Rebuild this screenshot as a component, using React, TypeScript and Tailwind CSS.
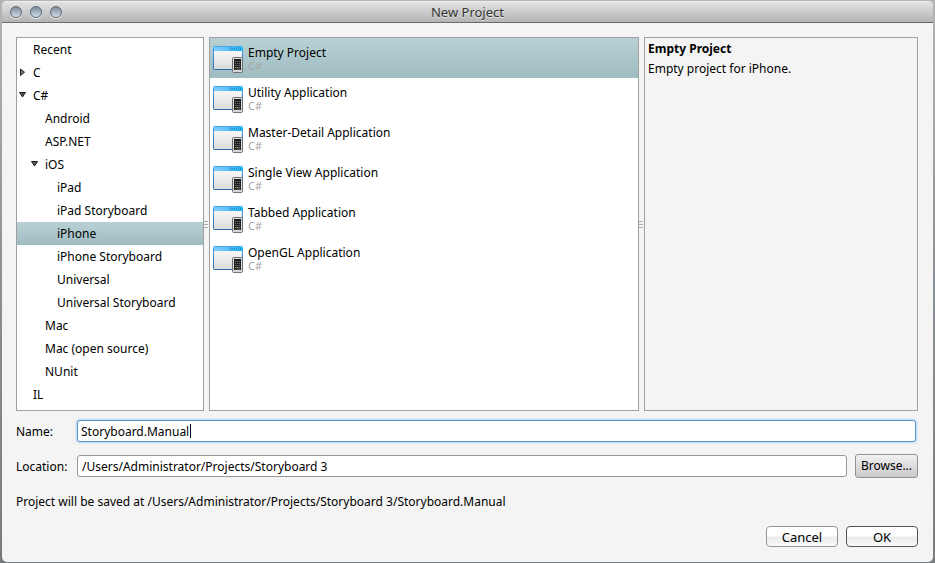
import { useState } from "react";

type Node = { label: string; depth: number; state?: "open" | "closed" };

const categories: Node[] = [
  { label: "Recent", depth: 0 },
  { label: "C", depth: 0, state: "closed" },
  { label: "C#", depth: 0, state: "open" },
  { label: "Android", depth: 1 },
  { label: "ASP.NET", depth: 1 },
  { label: "iOS", depth: 1, state: "open" },
  { label: "iPad", depth: 2 },
  { label: "iPad Storyboard", depth: 2 },
  { label: "iPhone", depth: 2 },
  { label: "iPhone Storyboard", depth: 2 },
  { label: "Universal", depth: 2 },
  { label: "Universal Storyboard", depth: 2 },
  { label: "Mac", depth: 1 },
  { label: "Mac (open source)", depth: 1 },
  { label: "NUnit", depth: 1 },
  { label: "IL", depth: 0 },
];

const templates = [
  "Empty Project",
  "Utility Application",
  "Master-Detail Application",
  "Single View Application",
  "Tabbed Application",
  "OpenGL Application",
];

const indents = ["pl-px", "pl-[13px]", "pl-[25px]"];
const selectedFill = "bg-linear-to-b from-[#b9d1d5] to-[#9fbcc1]";

function Disclosure({ state }: { state?: "open" | "closed" }) {
  return (
    <svg className="h-[9px] w-[9px] shrink-0" viewBox="0 0 9 9" aria-hidden="true">
      {state === "open" && <path d="M1.5 1.5h6L4.5 6z" fill="#555" stroke="#111" strokeWidth=".9" />}
      {state === "closed" && <path d="M2.5 1v6.5L6.5 4.2z" fill="#777" stroke="#111" strokeWidth=".9" />}
    </svg>
  );
}

function TemplateIcon() {
  return (
    <svg className="h-[28px] w-[31px] shrink-0" viewBox="0 0 31 28" aria-hidden="true">
      <defs>
        <linearGradient id="frame" x2="0" y2="1">
          <stop stopColor="#42a5ee" />
          <stop offset="1" stopColor="#2c67aa" />
        </linearGradient>
        <linearGradient id="pane" x2="0" y2="1">
          <stop stopColor="#fff" />
          <stop offset="1" stopColor="#dadada" />
        </linearGradient>
        <linearGradient id="bar">
          <stop stopColor="#80cdff" />
          <stop offset=".55" stopColor="#5abfff" />
          <stop offset="1" stopColor="#10c5fb" />
        </linearGradient>
      </defs>
      <rect x=".5" y=".5" width="29" height="23" rx=".8" fill="url(#pane)" stroke="url(#frame)" />
      <path d="M1 1h28v4H1z" fill="url(#bar)" />
      <path d="M1 5.5h28" stroke="#e8f7ff" strokeWidth=".6" />
      <g fill="#7fe0ff" stroke="#1279c0" strokeWidth=".8">
        <circle cx="18.5" cy="3" r="1.1" />
        <circle cx="22.5" cy="3" r="1.1" />
        <circle cx="26.5" cy="3" r="1.1" />
      </g>
      <rect x="19.5" y="11.5" width="10" height="15" rx="1.2" fill="#d8d8d8" stroke="#666" strokeWidth=".9" />
      <path d="M21 13h7v11h-7z" fill="#202124" />
      <path d="M22 15.5h5M22 17.5h5M22 19.5h5" stroke="#777" strokeWidth=".8" strokeDasharray="1.2 .7" />
      <path d="M22 21.5h1.6" stroke="#43b64b" />
      <path d="M24 21.5h1.4" stroke="#d0802f" />
      <path d="M26 21.5h1.4" stroke="#5089d4" />
      <path d="M22 23.2h1.6" stroke="#be474b" strokeWidth=".8" />
      <path d="M24 23.2h3" stroke="#808080" strokeWidth=".8" />
    </svg>
  );
}

function Splitter() {
  return (
    <div className="flex w-[5px] shrink-0 flex-col items-start justify-center gap-[2px]" role="separator" aria-orientation="vertical">
      <i className="h-px w-[4px] bg-[#b0b0b0]" />
      <i className="h-px w-[4px] bg-[#b0b0b0]" />
      <i className="h-px w-[4px] bg-[#b0b0b0]" />
    </div>
  );
}

const trafficLight =
  "size-[12px] rounded-full border border-[#5d6974] bg-linear-to-b from-[#7b8b9a] via-[#a3b3c0] to-[#d3dee7] shadow-[0_1px_0_#ededed]";

export default function App() {
  const [category, setCategory] = useState("iPhone");
  const [template, setTemplate] = useState("Empty Project");
  const [name, setName] = useState("Storyboard.Manual");
  const [location, setLocation] = useState("/Users/Administrator/Projects/Storyboard 3");
  const [editing, setEditing] = useState(false);

  return (
    <div className="h-screen min-h-[520px] bg-linear-to-b from-[#b4b4b4] via-[#8b9094] to-[#777b7e] pt-px pr-[2px] pb-px pl-[2px] font-['Noto_Sans',sans-serif] text-[12px] leading-[20px] text-black">
      <main className="flex h-full flex-col overflow-hidden rounded-[5px] bg-[#f4f4f4]">
        <header className="grid h-[22px] shrink-0 grid-cols-[1fr_auto_1fr] items-center border-t border-b border-t-[#f0f0f0] border-b-[#6c6c6c] bg-linear-to-b from-[#e3e3e3] to-[#b4b4b4] px-[8px]">
          <div className="flex gap-[8px]">
            <button aria-label="Close" className={trafficLight} />
            <button aria-label="Minimize" className={trafficLight} />
            <button aria-label="Zoom" className={trafficLight} />
          </div>
          <h1 className="text-[13px] text-[#333] [text-shadow:0_1px_0_#e8e8e8]">New Project</h1>
        </header>

        <div className="flex min-h-0 flex-1 flex-col pt-[14px] pr-[15px] pb-[15px] pl-[14px]">
          <section className="flex min-h-0 flex-1">
            <div role="tree" aria-label="Categories" className="w-[188px] shrink-0 overflow-hidden border border-[#a0a0a0] bg-white">
              {categories.map((node) => (
                <button
                  key={node.label}
                  role="treeitem"
                  aria-selected={category === node.label}
                  onClick={() => setCategory(node.label)}
                  className={`flex h-[23px] w-full items-center gap-[6px] text-left ${indents[node.depth]} ${category === node.label ? selectedFill : ""}`}
                >
                  <Disclosure state={node.state} />
                  <span>{node.label}</span>
                </button>
              ))}
            </div>
            <Splitter />
            <div role="listbox" aria-label="Templates" className="min-w-0 flex-1 overflow-hidden border border-[#a0a0a0] bg-white">
              {templates.map((title) => (
                <button
                  key={title}
                  role="option"
                  aria-selected={template === title}
                  onClick={() => setTemplate(title)}
                  className={`flex h-[40px] w-full items-start gap-[4px] pt-[8px] pl-[3px] text-left ${template === title ? selectedFill : ""}`}
                >
                  <TemplateIcon />
                  <span className="flex flex-col">
                    <span className="leading-[14px]">{title}</span>
                    <span className="text-[11px] leading-[11px] text-[#a5a5a5]">C#</span>
                  </span>
                </button>
              ))}
            </div>
            <Splitter />
            <aside className="w-[274px] shrink-0 border border-[#a0a0a0] px-[3px] pt-px">
              <h2 className="font-bold">Empty Project</h2>
              <p>Empty project for iPhone.</p>
            </aside>
          </section>

          <form onSubmit={(event) => event.preventDefault()}>
            <div className="mt-[9px] flex items-center">
              <label htmlFor="name" className="w-[61px] shrink-0 pt-[2px]">Name:</label>
              <div className="relative mr-[2px] flex-1">
                <input
                  id="name"
                  value={name}
                  onChange={(event) => setName(event.target.value)}
                  onFocus={() => setEditing(true)}
                  className="block h-[22px] w-full rounded-[3px] border border-[#5795d4] bg-white px-[3px] shadow-[0_0_2px_1px_#b9d5f0] outline-none"
                />
                {!editing && <i className="absolute top-[4px] left-[113px] h-[14px] w-px bg-black" />}
              </div>
            </div>
            <div className="mt-[12px] flex items-center">
              <label htmlFor="location" className="w-[61px] shrink-0 pt-[2px]">Location:</label>
              <input
                id="location"
                value={location}
                onChange={(event) => setLocation(event.target.value)}
                className="h-[22px] min-w-0 flex-1 rounded-[3px] border border-[#999] bg-white px-[4px] outline-none"
              />
              <button className="ml-[8px] h-[24px] w-[63px] shrink-0 rounded-[3px] border border-[#929292] bg-linear-to-b from-[#f2f2f2] to-[#c9c9c9]">
                Browse...
              </button>
            </div>
            <p className="mt-[14px]">Project will be saved at {location}/{name}</p>
            <div className="mt-[14px] flex justify-end gap-[8px] text-[13px] leading-[18px]">
              <button className="h-[21px] w-[72px] rounded-[4px] border border-[#969696] bg-linear-to-b from-white from-45% via-[#ececec] via-55% to-[#fafafa]">Cancel</button>
              <button className="h-[21px] w-[72px] rounded-[4px] border border-[#555] bg-linear-to-b from-white from-45% via-[#ececec] via-55% to-[#fafafa]">OK</button>
            </div>
          </form>
        </div>
      </main>
    </div>
  );
}
